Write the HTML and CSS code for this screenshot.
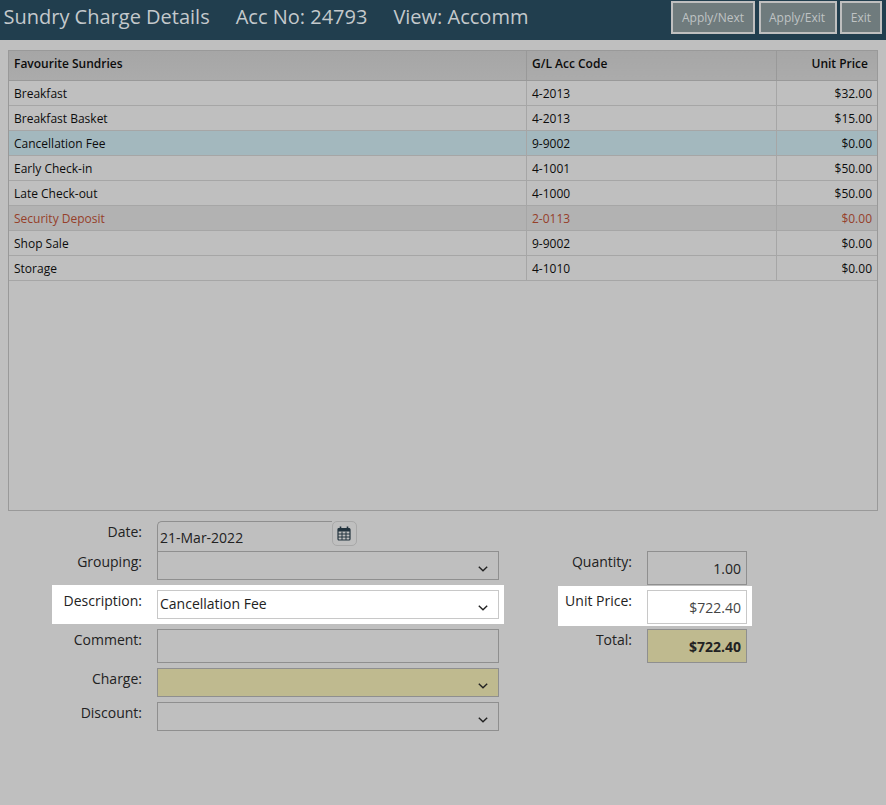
FILE: index.html
```html
<!DOCTYPE html>
<html lang="en">
<head>
    <meta charset="UTF-8">
    <meta name="viewport" content="width=device-width, initial-scale=1.0">
    <title>Sundry Charge Details</title>
    <link rel="stylesheet" href="styles.css">
</head>
<body>
    <header class="topbar">
        <h1 class="title">
            <span>Sundry Charge Details</span>
            <span>Acc No: 24793</span>
            <span>View: Accomm</span>
        </h1>
        <div class="actions">
            <button class="btn btn-next">Apply/Next</button>
            <button class="btn btn-exit">Apply/Exit</button>
            <button class="btn btn-close">Exit</button>
        </div>
    </header>

    <div class="list-box">
        <table class="sundries">
            <thead>
                <tr>
                    <th class="col-name">Favourite Sundries</th>
                    <th class="col-code">G/L Acc Code</th>
                    <th class="col-price">Unit Price</th>
                </tr>
            </thead>
            <tbody>
                <tr><td>Breakfast</td><td>4-2013</td><td class="price">$32.00</td></tr>
                <tr><td>Breakfast Basket</td><td>4-2013</td><td class="price">$15.00</td></tr>
                <tr class="selected"><td>Cancellation Fee</td><td>9-9002</td><td class="price">$0.00</td></tr>
                <tr><td>Early Check-in</td><td>4-1001</td><td class="price">$50.00</td></tr>
                <tr><td>Late Check-out</td><td>4-1000</td><td class="price">$50.00</td></tr>
                <tr class="deposit"><td>Security Deposit</td><td>2-0113</td><td class="price">$0.00</td></tr>
                <tr><td>Shop Sale</td><td>9-9002</td><td class="price">$0.00</td></tr>
                <tr><td>Storage</td><td>4-1010</td><td class="price">$0.00</td></tr>
            </tbody>
        </table>
    </div>

    <div class="form">
        <div class="form-left">
            <div class="row row-date">
                <label>Date:</label>
                <div class="field date-field">21-Mar-2022</div>
                <button class="cal-btn" aria-label="Pick date">
                    <svg width="14" height="15" viewBox="0 0 14 15">
                        <path d="M3.5 .5v3M10.5 .5v3" stroke="#23343f" stroke-width="1.6" fill="none"/>
                        <rect x="1" y="2.5" width="12" height="11.5" rx="1" fill="none" stroke="#23343f" stroke-width="1.2"/>
                        <rect x="1" y="2.5" width="12" height="3" fill="#23343f"/>
                        <path d="M1 8h12M1 11h12M5 5.5V14M9 5.5V14" stroke="#23343f" stroke-width="1" fill="none"/>
                    </svg>
                </button>
            </div>
            <div class="row">
                <label>Grouping:</label>
                <div class="field select"><svg class="chevron" width="10" height="6" viewBox="0 0 10 6"><path d="M.8 .8 5 4.8 9.2 .8" fill="none" stroke="#222" stroke-width="1.4"/></svg></div>
            </div>
            <div class="row row-hl">
                <label>Description:</label>
                <div class="field select">Cancellation Fee<svg class="chevron" width="10" height="6" viewBox="0 0 10 6"><path d="M.8 .8 5 4.8 9.2 .8" fill="none" stroke="#222" stroke-width="1.4"/></svg></div>
            </div>
            <div class="row">
                <label>Comment:</label>
                <div class="field comment"></div>
            </div>
            <div class="row">
                <label>Charge:</label>
                <div class="field select required"><svg class="chevron" width="10" height="6" viewBox="0 0 10 6"><path d="M.8 .8 5 4.8 9.2 .8" fill="none" stroke="#222" stroke-width="1.4"/></svg></div>
            </div>
            <div class="row">
                <label>Discount:</label>
                <div class="field select"><svg class="chevron" width="10" height="6" viewBox="0 0 10 6"><path d="M.8 .8 5 4.8 9.2 .8" fill="none" stroke="#222" stroke-width="1.4"/></svg></div>
            </div>
        </div>

        <div class="form-right">
            <div class="amount-row">
                <label>Quantity:</label>
                <div class="field amount">1.00</div>
            </div>
            <div class="amount-row amount-hl">
                <label>Unit Price:</label>
                <div class="field amount">$722.40</div>
            </div>
            <div class="amount-row amount-total">
                <label>Total:</label>
                <div class="field amount total">$722.40</div>
            </div>
        </div>
    </div>
</body>
</html>
```

FILE: styles.css
```css
* {
    margin: 0;
    padding: 0;
    box-sizing: border-box;
    font-family: 'Open Sans', sans-serif;
}

body {
    background: #bfbfbf;
    color: #111;
    height: 805px;
    overflow: hidden;
}

.topbar {
    height: 40px;
    background: #213e4e;
    display: flex;
    justify-content: space-between;
    align-items: flex-start;
    padding: 1px 4px 0 3.5px;
}

.title {
    display: flex;
    gap: 26px;
    font-size: 20px;
    font-weight: 400;
    line-height: 32px;
    color: #c4c9cc;
}

.actions {
    display: flex;
    gap: 4px;
}

.btn {
    height: 33px;
    border: 2px solid #bfbfbf;
    background: #6f7b7d;
    color: #bfc3c4;
    font-size: 12px;
}

.btn-next { width: 84px; }
.btn-exit { width: 78px; padding-right: 2px; margin-right: -1px; }
.btn-close { width: 42px; }

.list-box {
    margin: 10px 8px 0 8px;
    height: 461px;
    border: 1px solid #999;
}

.sundries {
    width: 100%;
    border-collapse: collapse;
    table-layout: fixed;
    font-size: 12px;
    color: #0c0c0c;
}

.sundries th {
    height: 29px;
    padding: 0 5px 3px 5px;
    background: linear-gradient(#a6a6a6, #ababab);
    text-align: left;
    font-weight: 600;
    border-bottom: 1px solid #999;
    border-right: 1px solid #999;
}

.sundries td {
    height: 25px;
    padding: 1px 5px 0 5px;
    border-bottom: 1px solid #a6a6a6;
    border-right: 1px solid #a6a6a6;
}

.sundries th:last-child,
.sundries td:last-child {
    border-right: 0;
}

.col-name { width: 517.5px; }
.col-code { width: 250px; }

.sundries .col-price {
    text-align: right;
    padding-right: 9px;
}

.sundries .price {
    text-align: right;
}

.selected td {
    background: #a3b8be;
}

.deposit td {
    background: #b2b2b2;
    color: #96402a;
}

.form {
    display: flex;
    padding: 10px 0 0 52px;
}

.form-left {
    width: 506px;
}

.row {
    display: flex;
    gap: 15px;
    width: 452px;
    padding-right: 5px;
    margin-bottom: 5px;
}

label {
    width: 90px;
    padding-top: 1px;
    text-align: right;
    font-size: 14px;
    line-height: 20px;
    color: #222;
}

.field {
    position: relative;
    width: 342px;
    height: 29px;
    border: 1px solid #8f8f8f;
    font-size: 14px;
    line-height: 25px;
    padding-left: 2px;
    color: #222;
}

.chevron {
    position: absolute;
    right: 10px;
    bottom: 7px;
}

.row-date {
    margin-bottom: 0;
    height: 30px;
}

.date-field {
    width: 175px;
    height: 30px;
    border-bottom: 0;
    border-right: 0;
    border-top-left-radius: 5px;
    line-height: 32px;
}

.cal-btn {
    margin-left: -15px;
    width: 25px;
    height: 25px;
    padding-right: 1px;
    background: #bfbfbf;
    border: 1px solid #a8a8a8;
    border-radius: 5px;
    display: flex;
    align-items: center;
    justify-content: center;
}

.row-hl {
    background: #fff;
    padding-top: 5px;
    padding-bottom: 5px;
}

.row-hl .field {
    border-color: #c8c8c8;
    background: #fff;
}

.comment {
    height: 34px;
}

.required {
    background: #bfba8f;
}

.form-right {
    padding-top: 30px;
}

.amount-row {
    display: flex;
    gap: 15px;
    width: 194px;
}

.amount-row label {
    width: 74px;
    padding-top: 0;
    margin-top: 1px;
}

.field.amount {
    width: 100px;
    height: 34px;
    line-height: 34px;
    padding: 0 5px 0 0;
    text-align: right;
}

.amount-hl {
    background: #fff;
    height: 40px;
    margin: 1px 0 3px 0;
    padding-top: 4px;
}

.amount-hl .field {
    border-color: #c8c8c8;
    color: #444;
    line-height: 34px;
}

.field.total {
    background: #bfba8f;
    font-weight: 700;
}
```
